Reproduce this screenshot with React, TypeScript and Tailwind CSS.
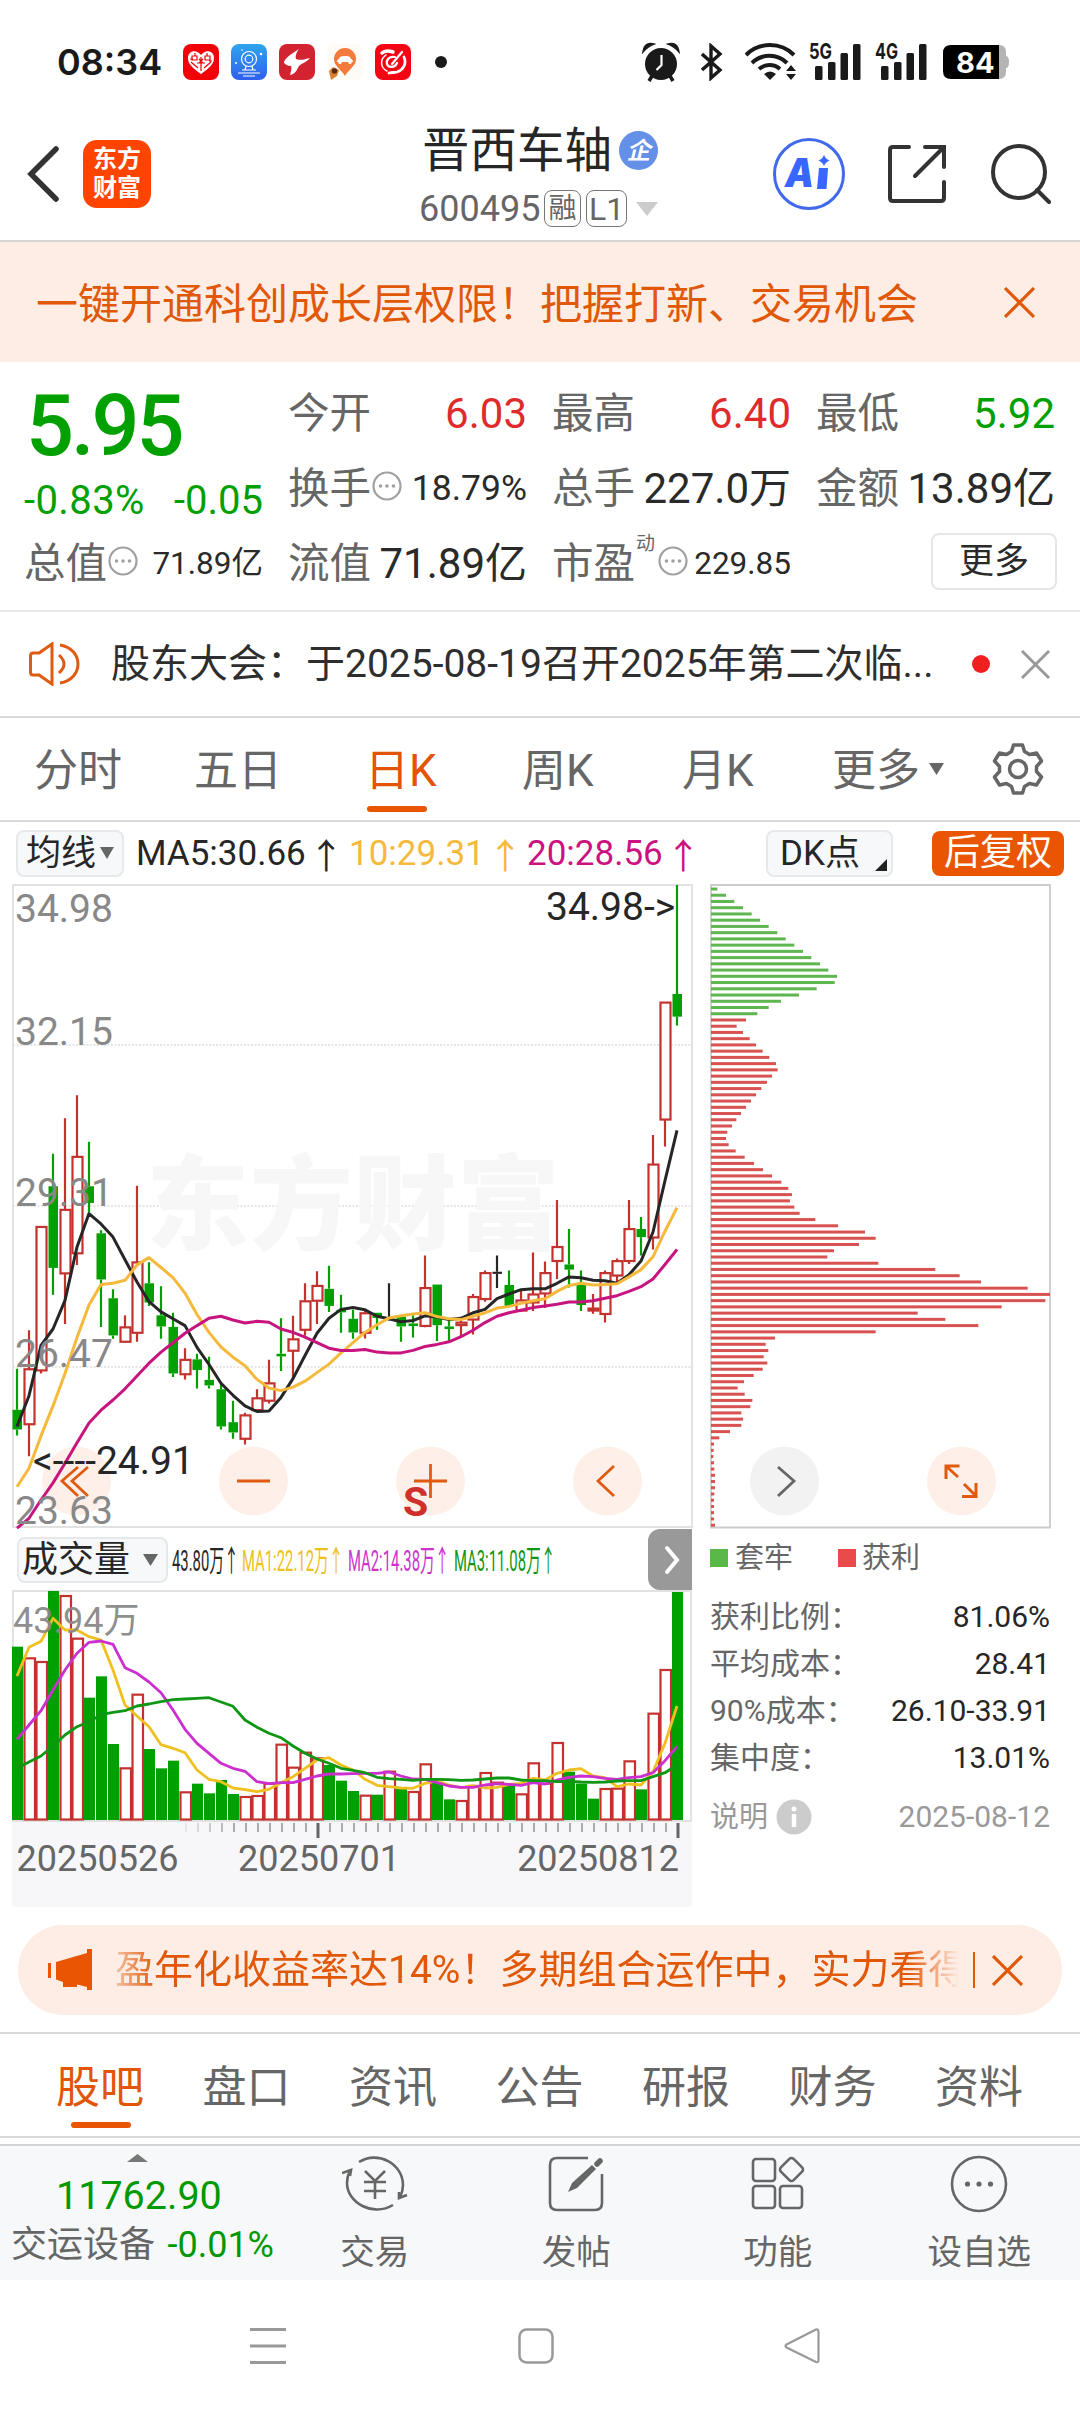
import type { ReactNode } from "react";
import { clsx } from "clsx";

type Kind = "up" | "down" | "flat";

const RED = "#c43230";
const GREEN = "#00a000";
const INK = "#262626";

const STEP = 12;
const barX = (i: number) => 5 + i * STEP;

// [kind, high, body top, body bottom, low]
const candles: [Kind, number, number, number, number][] = [
  ["down", 1165, 1261, 1307, 1321],
  ["up", 1075, 1165, 1296, 1370],
  ["up", 832, 832, 1170, 1176],
  ["down", 662, 738, 929, 992],
  ["up", 579, 792, 943, 1060],
  ["up", 525, 668, 896, 922],
  ["down", 634, 738, 777, 798],
  ["down", 841, 848, 956, 1067],
  ["down", 979, 1000, 1087, 1095],
  ["up", 1040, 1067, 1103, 1103],
  ["up", 737, 915, 1082, 1102],
  ["down", 916, 965, 1010, 1018],
  ["down", 972, 1040, 1066, 1095],
  ["down", 1034, 1067, 1176, 1184],
  ["up", 1117, 1143, 1179, 1190],
  ["down", 1130, 1143, 1168, 1211],
  ["down", 1137, 1191, 1204, 1211],
  ["down", 1200, 1213, 1300, 1307],
  ["down", 1240, 1290, 1314, 1329],
  ["up", 1268, 1273, 1330, 1342],
  ["up", 1213, 1233, 1263, 1265],
  ["up", 1144, 1198, 1241, 1246],
  ["down", 1047, 1130, 1136, 1170],
  ["up", 1041, 1095, 1124, 1185],
  ["up", 965, 1006, 1075, 1088],
  ["up", 937, 970, 1007, 1060],
  ["down", 924, 978, 1018, 1032],
  ["down", 992, 1027, 1033, 1081],
  ["down", 1027, 1048, 1080, 1095],
  ["up", 1030, 1034, 1082, 1094],
  ["down", 1034, 1034, 1046, 1074],
  ["flat", 965, 1044, 1048, 1052],
  ["down", 1040, 1043, 1066, 1102],
  ["down", 1040, 1059, 1065, 1092],
  ["up", 900, 975, 1066, 1068],
  ["down", 968, 968, 1063, 1100],
  ["down", 1050, 1066, 1072, 1100],
  ["up", 1052, 1056, 1064, 1090],
  ["up", 990, 996, 1051, 1085],
  ["up", 935, 940, 1003, 1008],
  ["flat", 900, 938, 943, 976],
  ["down", 935, 969, 1018, 1020],
  ["up", 982, 1004, 1030, 1031],
  ["up", 893, 990, 1011, 1030],
  ["up", 914, 940, 990, 1023],
  ["up", 770, 879, 914, 955],
  ["down", 838, 921, 933, 975],
  ["down", 935, 965, 1016, 1030],
  ["up", 990, 1023, 1030, 1036],
  ["up", 935, 940, 1038, 1057],
  ["up", 907, 912, 948, 965],
  ["up", 770, 837, 914, 920],
  ["down", 810, 838, 857, 900],
  ["up", 618, 686, 859, 886],
  ["up", 307, 307, 583, 645],
  ["down", 33, 288, 341, 362],
];

const ma5 = [1300, 1228, 1110, 1072, 1005, 880, 802, 826, 857, 910, 962, 1008, 1032, 1048, 1064, 1115, 1155, 1199, 1227, 1252, 1265, 1264, 1232, 1188, 1134, 1082, 1047, 1026, 1022, 1027, 1042, 1048, 1055, 1052, 1041, 1044, 1050, 1047, 1034, 1026, 1001, 990, 980, 978, 978, 965, 950, 952, 958, 959, 965, 945, 913, 845, 725, 607];
const ma10 = [1441, 1398, 1322, 1252, 1176, 1092, 1016, 968, 965, 958, 922, 905, 928, 952, 988, 1038, 1080, 1114, 1138, 1158, 1190, 1210, 1216, 1208, 1194, 1174, 1154, 1128, 1104, 1080, 1062, 1046, 1041, 1037, 1034, 1043, 1048, 1050, 1042, 1034, 1023, 1019, 1012, 1006, 1001, 984, 970, 965, 969, 968, 966, 950, 933, 903, 843, 788];
const ma20 = [1538, 1515, 1472, 1432, 1386, 1338, 1292, 1262, 1238, 1212, 1182, 1152, 1126, 1104, 1082, 1064, 1047, 1042, 1051, 1058, 1054, 1056, 1072, 1080, 1091, 1104, 1117, 1122, 1122, 1120, 1126, 1128, 1128, 1122, 1113, 1108, 1102, 1090, 1075, 1057, 1042, 1034, 1028, 1022, 1018, 1014, 1009, 1009, 1006, 1000, 994, 984, 973, 955, 921, 886];

const volumes: [0 | 1, number][] = [
  [0, 380], [1, 412], [1, 423], [0, 213], [1, 225], [1, 353], [0, 533], [0, 469], [0, 672], [1, 742],
  [1, 521], [0, 687], [0, 745], [0, 722], [1, 814], [0, 791], [0, 820], [0, 780], [0, 822], [1, 828],
  [1, 825], [1, 788], [1, 671], [1, 740], [1, 695], [1, 712], [0, 735], [0, 782], [0, 813], [1, 824],
  [0, 824], [1, 752], [0, 805], [1, 813], [1, 730], [0, 785], [0, 838], [1, 840], [1, 795], [1, 756],
  [1, 785], [0, 795], [1, 820], [1, 727], [1, 788], [1, 666], [0, 755], [0, 791], [0, 836], [1, 804],
  [1, 803], [1, 721], [0, 808], [1, 578], [1, 447], [0, 216],
];
const vma1 = [468, 382, 364, 295, 330, 330, 350, 360, 450, 555, 588, 620, 674, 685, 698, 750, 778, 785, 804, 809, 815, 808, 788, 770, 745, 720, 713, 735, 750, 778, 796, 800, 804, 805, 790, 783, 795, 803, 797, 804, 802, 793, 790, 775, 780, 760, 750, 746, 768, 773, 800, 792, 795, 755, 670, 558];
const vma2 = [658, 615, 572, 510, 450, 400, 367, 363, 373, 443, 460, 486, 518, 570, 628, 670, 700, 730, 745, 754, 785, 791, 788, 788, 778, 768, 762, 762, 761, 760, 760, 756, 768, 777, 778, 788, 798, 802, 802, 795, 791, 793, 796, 788, 792, 780, 772, 768, 770, 775, 778, 773, 770, 758, 722, 680];
const vma3 = [745, 726, 708, 678, 645, 620, 605, 584, 577, 572, 558, 552, 545, 539, 537, 535, 533, 546, 559, 600, 622, 640, 653, 678, 700, 717, 730, 745, 751, 758, 772, 776, 778, 781, 778, 778, 779, 781, 780, 777, 774, 774, 780, 782, 782, 785, 784, 786, 787, 786, 783, 782, 782, 770, 758, 735];

const chips = [
  81, 107, 132, 158, 184, 209, 235, 261, 286, 312, 338, 363, 389, 414, 440, 433, 379, 326, 272, 235, 201,
  167, 139, 158, 178, 197, 217, 237, 257, 262, 245, 230, 213, 197, 182, 167, 152, 138, 125, 111, 107, 115,
  136, 163, 191, 218, 245, 273, 294, 305, 299, 312, 328, 375, 443, 524, 556, 506, 431, 411, 564, 735, 808,
  872, 1012, 1079, 1065, 934, 682, 765, 864, 556, 254, 226, 234, 220, 231, 217, 190, 161, 142, 163, 186,
  180, 153, 158, 153, 119, 87, 71, 70, 69, 71, 72, 74, 74, 74, 72, 71, 71, 71, 71, 74,
];
const TRAPPED_ROWS = 21;

const priceY = (v: number) => (v - 33) / 2.34 + 1;
const volumeY = (v: number) => (v - 213) / 3 + 1;
const linePoints = (values: number[], y: (v: number) => number) =>
  values.map((v, i) => `${barX(i)},${y(v).toFixed(1)}`).join(" ");

function Cross({ size, className }: { size: number; className?: string }) {
  return (
    <svg width={size} height={size} viewBox="0 0 30 30" fill="none" stroke="currentColor" strokeWidth="3" className={className}>
      <path d="M1 1 29 29M29 1 1 29" />
    </svg>
  );
}

function Caret({ w, h, className }: { w: number; h: number; className?: string }) {
  return (
    <svg width={w} height={h} viewBox="0 0 10 8" preserveAspectRatio="none" fill="currentColor" className={className}>
      <path d="M0 0H10L5 8z" />
    </svg>
  );
}

function Dots({ className }: { className?: string }) {
  return (
    <svg width="30" height="30" viewBox="0 0 30 30" className={clsx("shrink-0 text-[#a0a0a0]", className)}>
      <circle cx="15" cy="15" r="13.5" fill="none" stroke="currentColor" strokeWidth="2.2" />
      <g fill="currentColor">
        <circle cx="8.5" cy="15" r="1.8" />
        <circle cx="15" cy="15" r="1.8" />
        <circle cx="21.5" cy="15" r="1.8" />
      </g>
    </svg>
  );
}

function Signal({ label, className }: { label: string; className: string }) {
  return (
    <svg width="54" height="48" viewBox="0 -8 54 48" className={clsx("-mt-2", className)} fill="#1a1a1a">
      <text x="0" y="17" fontSize="22" fontWeight="700" textLength="23" lengthAdjust="spacingAndGlyphs" className="font-[Inter]">
        {label}
      </text>
      <rect x="6" y="24" width="7.5" height="14" rx="1.5" />
      <rect x="19" y="20" width="7.5" height="18" rx="1.5" />
      <rect x="31.5" y="11" width="7.5" height="27" rx="1.5" />
      <rect x="44" y="2" width="7.5" height="36" rx="1.5" />
    </svg>
  );
}

function StatusBar() {
  return (
    <div className="flex h-[124px] items-center pl-[57px]">
      <span className="w-[126px] font-[Inter] text-[36px] font-semibold leading-none text-[#1a1a1a]">08:34</span>
      <div className="flex gap-3">
        <svg width="36" height="36" viewBox="0 0 36 36">
          <rect width="36" height="36" rx="8" fill="#f20007" />
          <path d="M18 30C8 23 5 19 5 14c0-8 9-9 13-3 4-6 13-5 13 3 0 5-3 9-13 16z" fill="#fff" />
          <path d="M9 12h5v4h-5zM22 12h5v4h-5zM14 19h8M18 13v14M8 18l7 6M28 18l-7 6M16 15l4 4M20 15l-4 4M12 9v3M24 9v3M7 15h3M26 17h3" stroke="#f20007" strokeWidth="1.2" fill="none" />
        </svg>
        <svg width="36" height="36" viewBox="0 0 36 36">
          <defs>
            <linearGradient id="cam" x1="0" y1="0" x2="0" y2="1">
              <stop stopColor="#2fa5ee" />
              <stop offset="1" stopColor="#2f5fee" />
            </linearGradient>
          </defs>
          <rect width="36" height="36" rx="8" fill="url(#cam)" />
          <g fill="none" stroke="#fff" strokeWidth="1.2">
            <circle cx="18" cy="15" r="7.5" />
            <circle cx="18" cy="15" r="3.8" />
            <path d="M15 22l-1 4M21 22l1 4M11 26h14M7 29h22M12 32h12" />
          </g>
          <circle cx="30" cy="10" r="1.3" fill="#fff" />
          <circle cx="5" cy="19" r="1" fill="#fff" />
          <circle cx="11" cy="6" r=".8" fill="#fff" />
        </svg>
        <svg width="36" height="36" viewBox="0 0 36 36">
          <rect width="36" height="36" rx="8" fill="#d32230" />
          <path d="M5 19C5 14 13 10 20 5c-3 4-4 7-3 10 5 2 9 0 14-1-3 4-8 5-11 8-2 3-3 8-9 9 1-4 2-7 1-9-3 0-5-1-7-3z" fill="#fff" />
        </svg>
        <svg width="36" height="36" viewBox="0 0 36 36">
          <rect width="36" height="36" rx="8" fill="#fefaf5" />
          <path d="M18 32c-4-7-11-10-11-17a11 11 0 0 1 22 0c0 7-7 10-11 17z" fill="#f47b3b" />
          <path d="M10 18c0-3 2-2 3-5q1-1 5-1t5 1c1 3 3 2 3 5z" fill="#fff" />
          <circle cx="13" cy="18.5" r="1.6" fill="#fff" />
          <circle cx="23" cy="18.5" r="1.6" fill="#fff" />
          <path d="M2 27l4-4 6 3-2 6-6 4z" fill="#d9822f" />
          <circle cx="7.5" cy="27" r="2.7" fill="#5b2c14" />
        </svg>
        <svg width="36" height="36" viewBox="0 0 36 36">
          <rect width="36" height="36" rx="8" fill="#f50514" />
          <g fill="none" stroke="#fff" strokeLinecap="round">
            <path d="M7 9c3-3 8-2 11-1" strokeWidth="3.5" />
            <path d="M11 11C4 16 6 24 12 27" strokeWidth="1.5" />
            <path d="M20 13c-6-1-9 3-8 7s8 4 10-1" strokeWidth="2.2" />
            <path d="M27 8 17 20" strokeWidth="2.2" />
            <path d="M29 13c3 7-1 13-7 15-4 1-5 0-8 1" strokeWidth="2.8" />
          </g>
        </svg>
      </div>
      <i className="ml-6 size-3 rounded-full bg-[#1a1a1a]" />
      <svg width="38" height="40" viewBox="0 0 38 40" className="ml-[195px]" fill="#1a1a1a">
        <circle cx="19" cy="22" r="16" />
        <path d="M1 10C2 3 6 0 12 2q-6 2-11 8zM37 10C36 3 32 0 26 2q6 2 11 8z" stroke="#1a1a1a" strokeWidth="1.5" />
        <path d="M10 34 7 39M28 34l3 5" stroke="#1a1a1a" strokeWidth="3.5" />
        <path d="M19.500 13v10l-5 5" fill="none" stroke="#fff" strokeWidth="2.2" />
      </svg>
      <svg width="22" height="38" viewBox="0 0 22 38" className="ml-[21px]" fill="none" stroke="#1a1a1a" strokeWidth="3.4">
        <path d="M1 11 19 27 10 35V3l9 8L1 27" />
      </svg>
      <svg width="52" height="38" viewBox="0 0 52 38" className="ml-[22px]" fill="none" stroke="#1a1a1a" strokeWidth="4">
        <path d="M1 12a34 34 0 0 1 48 0M7 20a25 25 0 0 1 35 0M14 26a16 16 0 0 1 21 0" />
        <path d="M19 31q6-5 12 0l-6 6z" fill="#1a1a1a" stroke="none" />
        <path d="M41 28h10l-5-6zM41 31h10l-5 6z" fill="#1a1a1a" stroke="none" />
      </svg>
      <Signal label="5G" className="ml-[12px]" />
      <Signal label="4G" className="ml-[12px]" />
      <div className="relative ml-[14px] h-[34px] w-[66px]">
        <svg width="66" height="34" viewBox="0 0 66 34">
          <path d="M56 0q7 0 7 7v4q3 0 3 6t-3 6v4q0 7-7 7z" fill="#b4b4b4" />
          <path d="M8 0H56V34H8q-8 0-8-8V8q0-8 8-8z" />
        </svg>
        <span className="absolute left-[13px] top-0 font-[Inter] text-[29px] font-bold leading-[35px] text-white">84</span>
      </div>
    </div>
  );
}

function Header() {
  return (
    <header className="flex h-[118px] items-center border-b-2 border-[#d6d6d6] pb-[16px] pl-[26px]">
      <svg width="34" height="58" viewBox="0 0 34 58" fill="none" stroke="#333" strokeWidth="5.5">
        <path d="M30 4 5 29l25 25" strokeLinecap="round" />
      </svg>
      <div className="ml-[23px] grid size-[68px] place-content-center rounded-[14px] bg-[#ff4400] text-center text-[24px] font-bold leading-[29px] text-white">
        <span>东方</span>
        <span>财富</span>
      </div>
      <div className="ml-[268px] flex w-[341px] flex-col pt-[7px]">
        <div className="flex h-[52px] items-center pl-[3px] text-[47.5px] leading-[52px] text-[#262626]">
          晋西车轴
          <span className="ml-[7px] grid size-[39px] place-content-center rounded-full bg-[#6490e8] text-[24px] font-bold italic leading-none text-white">
            企
          </span>
        </div>
        <div className="mt-[10px] flex h-[44px] items-center text-[36px] leading-none text-[#666]">
          <span className="w-[125px]">600495</span>
          <span className="grid h-[37px] w-[37px] place-content-center rounded-lg border border-[#777] text-[28px]">融</span>
          <span className="ml-[5px] grid h-[37px] w-[41px] place-content-center rounded-lg border border-[#777] text-[32px]">L1</span>
          <Caret w={22} h={14} className="ml-[9px] text-[#ccc]" />
        </div>
      </div>
      <svg width="72" height="72" viewBox="0 0 72 72" className="ml-[13px]">
        <circle cx="36" cy="36" r="34.5" fill="none" stroke="#4169eb" strokeWidth="3" />
        <text x="12" y="49" fontSize="40" fontWeight="900" fontStyle="italic" fill="#3866ff" textLength="29" lengthAdjust="spacingAndGlyphs" className="font-[Inter]">A</text>
        <path d="M46 30h9l-1.500 21h-9.500z" fill="#3866ff" />
        <path d="M51 17q1.500 4 5.500 5.500-4 1.500-5.500 5.500-1.500-4-5.500-5.500 4-1.500 5.500-5.500z" fill="#3866ff" />
      </svg>
      <svg width="58" height="58" viewBox="0 0 58 58" className="ml-[43px]" fill="none" stroke="#333" strokeWidth="4" strokeLinecap="round">
        <path d="M21 2H5Q2 2 2 5V53q0 3 3 3H53q3 0 3-3V37" />
        <path d="M37 2H56V22M55 3 27 31" />
      </svg>
      <svg width="60" height="60" viewBox="0 0 60 60" className="ml-[45px]" fill="none" stroke="#333" strokeWidth="4" strokeLinecap="round">
        <circle cx="28" cy="28" r="26" />
        <path d="M46 46 58 58" />
      </svg>
    </header>
  );
}

function Quote({ label, value, tone, dots, sup }: { label: string; value: string; tone?: string; dots?: boolean; sup?: string }) {
  return (
    <div className="flex items-center justify-between whitespace-nowrap">
      <span className="flex items-center text-[41.5px] text-[#666]">
        {label}
        {sup && <sup className="-top-[20px] self-center pl-px text-[19px] leading-none">{sup}</sup>}
        {dots && <Dots className={clsx("-mt-[6px]", sup ? "ml-[3px]" : "ml-px")} />}
      </span>
      <span className={clsx(dots ? (label === "换手" ? "text-[35.5px]" : "text-[31.5px]") : "text-[42px]", tone ?? "text-[#2a2a2a]")}>{value}</span>
    </div>
  );
}

function Quotes() {
  return (
    <section className="h-[250px] border-b-2 border-[#eaeaea] pt-[14px]">
      <div className="grid grid-cols-[239px_239px_239px_239px] grid-rows-[75px_75px_75px] gap-x-[25px] pl-6 leading-none">
        <div className="row-span-2 flex flex-col text-[#00a000]">
          <span className="pl-[2px] pt-[6px] text-[84.5px] font-medium leading-[90px] tracking-[-3px]">5.95</span>
          <span className="mt-[7px] flex justify-between text-[40px] leading-[44px]">
            <span className="tracking-[.4px]">-0.83%</span>
            <span>-0.05</span>
          </span>
        </div>
        <Quote label="今开" value="6.03" tone="text-[#de2b2b]" />
        <Quote label="最高" value="6.40" tone="text-[#de2b2b]" />
        <Quote label="最低" value="5.92" tone="text-[#00a000]" />
        <Quote label="换手" value="18.79%" dots />
        <Quote label="总手" value="227.0万" />
        <Quote label="金额" value="13.89亿" />
        <Quote label="总值" value="71.89亿" dots />
        <Quote label="流值" value="71.89亿" />
        <Quote label="市盈" value="229.85" dots sup="动" />
        <div className="flex items-center justify-end">
          <button className="-mr-[2px] mb-1 h-[57px] w-[126px] rounded-lg border-2 border-[#e6e6e6] text-[35px] leading-none text-[#2a2a2a]">更多</button>
        </div>
      </div>
    </section>
  );
}

const periods = [
  { name: "分时", width: "w-[160px]" },
  { name: "五日", width: "w-[171px]" },
  { name: "日K", width: "w-[157px]", active: true },
  { name: "周K", width: "w-[160px]" },
  { name: "月K", width: "w-[150px]" },
];

function PeriodTabs() {
  return (
    <nav className="flex h-[104px] items-center border-b-2 border-[#d9d9d9] pl-[34px] text-[44px] leading-none text-[#666]">
      {periods.map((p) => (
        <span key={p.name} className={clsx("relative pt-[4px]", p.width, p.active && "text-[#e25406]")}>
          {p.name}
          {p.active && <i className="absolute -bottom-[19px] left-[2px] h-[6px] w-[60px] rounded-full bg-[#ea5504]" />}
        </span>
      ))}
      <span className="pt-[4px]">更多</span>
      <Caret w={15} h={12} className="ml-[9px]" />
      <svg width="54" height="54" viewBox="0 0 54 54" className="ml-[47px]" fill="none" stroke="#666" strokeWidth="3.5" strokeLinejoin="round">
        <path d="M22.500 3h9l2 6.500 5 3 7-1.500 5 8-5 5.500v5l5 5.500-5 8-7-1.500-5 3-2 6.500h-9l-2-6.500-5-3-7 1.500-5-8 5-5.500v-5l-5-5.500 5-8 7 1.500 5-3z" />
        <circle cx="27" cy="27" r="8.5" />
      </svg>
    </nav>
  );
}

function Chip({ children, className }: { children: ReactNode; className?: string }) {
  return (
    <button className={clsx("flex items-center rounded-lg border-2 border-[#e6e8eb] bg-[#f7f8fa] leading-none text-[#262626]", className)}>
      {children}
    </button>
  );
}

function Average({ text, className }: { text: string; className: string }) {
  return (
    <span className={clsx("flex whitespace-nowrap", className)}>
      {text}
      <span className="ml-[3px] font-['Noto_Sans_CJK_SC']">↑</span>
    </span>
  );
}

function IndicatorRow() {
  return (
    <div className="flex h-[62px] items-center pl-4 text-[35px] leading-none">
      <Chip className="h-[47px] w-[108px] gap-[4px] pl-2 text-[35px]">
        均线
        <Caret w={14} h={12} className="text-[#666]" />
      </Chip>
      <Average text="MA5:30.66" className="ml-[12px] w-[213px] text-[#262626]" />
      <Average text="10:29.31" className="w-[178px] text-[#f5b93c]" />
      <Average text="20:28.56" className="w-[239px] text-[#cc1280]" />
      <Chip className="relative h-[47px] w-[127px] pl-[12px] text-[35px]">
        DK点
        <i className="absolute bottom-[4px] right-[4px] border-b-12 border-l-12 border-b-[#222] border-l-transparent" />
      </Chip>
      <span className="ml-[39px] grid h-[45px] w-[132px] place-content-center rounded-lg bg-[#ea5504] text-[36px] text-white">后复权</span>
    </div>
  );
}

const averages = [
  { values: ma5, color: INK },
  { values: ma10, color: "#f5b93c" },
  { values: ma20, color: "#c8147f" },
];

const axisLabels: [string, number][] = [
  ["34.98", 38],
  ["32.15", 161],
  ["29.31", 322],
  ["26.47", 483],
  ["23.63", 640],
];

function PriceChart() {
  return (
    <svg width="680" height="645" viewBox="0 0 680 645" className="block overflow-visible">
      <rect x="1" y="1" width="679" height="642" fill="none" stroke="#e2e2e2" strokeWidth="2" />
      {[161, 322, 483].map((y) => (
        <path key={y} d={`M1 ${y}H679`} stroke="#dedede" strokeWidth="1.5" strokeDasharray="2 1.5" />
      ))}
      <text x="134" y="358" fontSize="103" fontWeight="900" fill="#f7f7f7" textLength="414">东方财富</text>
      {[64.5, 241.5, 418.5, 595.5].map((x) => (
        <circle key={x} cx={x} cy="597" r="34.5" fill="#fef0e8" />
      ))}
      {candles.map(([kind, high, top, bottom, low], i) => {
        const color = kind === "up" ? RED : kind === "down" ? GREEN : INK;
        const x = barX(i);
        const y1 = priceY(top);
        const y2 = priceY(bottom);
        return (
          <g key={i} stroke={color} strokeWidth="2.2">
            <path d={`M${x} ${priceY(high)}V${y1}M${x} ${y2}V${priceY(low)}`} />
            {kind === "up" ? (
              <rect x={x - 4.5} y={y1 + 0.5} width="10" height={Math.max(y2 - y1 - 1, 1)} fill="#fff" />
            ) : (
              <rect x={x - 4.5} y={y1} width="9.5" height={Math.max(y2 - y1, 2)} fill={color} stroke="none" />
            )}
          </g>
        );
      })}
      {averages.map((a) => (
        <polyline key={a.color} points={linePoints(a.values, priceY)} fill="none" stroke={a.color} strokeWidth="3" strokeLinejoin="round" />
      ))}
      <g fontSize="39" fill="#888" className="font-[Roboto]">
        {axisLabels.map(([label, y]) => (
          <text key={label} x="3" y={y}>{label}</text>
        ))}
        <text x="21" y="590" fill={INK}>{"<----24.91"}</text>
        <text x="534" y="36" fill={INK}>{"34.98->"}</text>
        <text x="391" y="632" fontSize="41" fontWeight="700" fill="#d0302c">S</text>
      </g>
      <g fill="none" stroke="#e05a10" strokeWidth="2.8">
        <path d="M66 583 50 597l16 15M76 583 60 597l16 15" />
        <path d="M225 597h33M402 597h33M418.500 580v34" />
        <path d="M602 582 586 597l16 15" />
      </g>
    </svg>
  );
}

function ChipChart() {
  return (
    <svg width="341" height="645" viewBox="0 0 341 645" className="block">
      <path d="M1 1H340V643.500H1z" fill="none" stroke="#ccc" strokeWidth="1.8" />
      {chips.map((end, i) => (
        <rect key={i} x="1" y={3.5 + i * 6.237} width={(end - 62) / 3} height="3" fill={i < TRAPPED_ROWS ? "#5fb54f" : "#d85252"} />
      ))}
      <circle cx="74.5" cy="597" r="34.5" fill="#f2f2f2" />
      <path d="M68 583l16 14-16 15" fill="none" stroke="#666" strokeWidth="2.8" />
      <circle cx="251.5" cy="597" r="34.5" fill="#fef0e8" />
      <path d="M249.500 582H236V595M236 582l12 11M254 600l12 12M266 599V612.500H252" fill="none" stroke="#e05a10" strokeWidth="3" />
    </svg>
  );
}

const volumeLegend = [
  { text: "43.80万↑", x: 4, color: "#262626" },
  { text: "MA1:22.12万↑", x: 74, color: "#f0c020" },
  { text: "MA2:14.38万↑", x: 180, color: "#cc33cc" },
  { text: "MA3:11.08万↑", x: 286, color: "#0f9614" },
];

const volumeAverages = [
  { values: vma1, color: "#f0c020" },
  { values: vma2, color: "#cc2fcf" },
  { values: vma3, color: "#0f9614" },
];

function VolumeChart() {
  return (
    <svg width="680" height="317" viewBox="0 0 680 317" className="block">
      <rect x="0" y="232" width="680" height="85" fill="#f7f7fa" />
      <rect x="1" y="1" width="678" height="230" fill="none" stroke="#e2e2e2" strokeWidth="2" />
      {volumes.map(([up, top], i) => {
        const x = barX(i);
        const y = volumeY(top);
        return up ? (
          <rect key={i} x={x - 4.5} y={y + 1} width="10.5" height={228.5 - y} fill="#fff" stroke={RED} strokeWidth="2.2" />
        ) : (
          <rect key={i} x={x - 5} y={y} width="11" height={230 - y} fill={GREEN} />
        );
      })}
      {volumeAverages.map((a) => (
        <polyline key={a.color} points={linePoints(a.values, volumeY)} fill="none" stroke={a.color} strokeWidth="2.8" strokeLinejoin="round" />
      ))}
      <text x="1" y="43" fontSize="36" fill="#888" fillOpacity=".95">43.94万</text>
      {volumes.map((_, i) => {
        if (i < 14) return null;
        const major = i === 25 || i === 55;
        return (
          <path
            key={i}
            d={`M${barX(i) + 1} 233V${major ? 248 : 242}`}
            stroke={major ? "#666" : "#999"}
            strokeWidth={major ? 3 : 1.6}
            opacity={Math.min(1, (i - 13) / 5)}
          />
        );
      })}
      <g fontSize="36" fill="#666">
        <text x="4.5" y="281">20250526</text>
        <text x="226" y="281">20250701</text>
        <text x="667" y="281" textAnchor="end">20250812</text>
      </g>
    </svg>
  );
}

function VolumeHeader() {
  return (
    <div className="flex h-[61px] items-center pl-[5px]">
      <Chip className="h-[46px] w-[151px] shrink-0 pl-[3px] text-[36px]">
        成交量
        <Caret w={15} h={12} className="ml-[13px] text-[#666]" />
      </Chip>
      <svg width="480" height="46" viewBox="0 0 480 46" className="shrink-0" fontSize="30">
        {volumeLegend.map((l) => (
          <text key={l.text} transform={`translate(${l.x} 34) scale(.495 1)`} fill={l.color}>{l.text}</text>
        ))}
      </svg>
      <span className="grid h-[61px] w-[44px] shrink-0 place-content-center rounded-l-xl bg-[#999] pl-[3px]">
        <svg width="18" height="30" viewBox="0 0 18 30" fill="none" stroke="#fff" strokeWidth="4" strokeLinecap="round">
          <path d="M4 3 14 15 4 27" />
        </svg>
      </span>
    </div>
  );
}

const stats = [
  ["获利比例：", "81.06%"],
  ["平均成本：", "28.41"],
  ["90%成本：", "26.10-33.91"],
  ["集中度：", "13.01%"],
];

function CostPanel() {
  return (
    <div className="w-[340px] pt-[5px] text-[30px] leading-none text-[#666]">
      <div className="flex h-[48px] items-center">
        <i className="size-[18px] bg-[#5ab946]" />
        <span className="ml-[7px] w-[103px] text-[29px]">套牢</span>
        <i className="size-[18px] bg-[#ea4a4a]" />
        <span className="ml-[6px] text-[29px]">获利</span>
      </div>
      <dl className="mt-[11px] grid auto-rows-[47px]">
        {stats.map(([name, value]) => (
          <div key={name} className="flex items-center justify-between">
            <dt>{name}</dt>
            <dd className="text-[#262626]">{value}</dd>
          </div>
        ))}
      </dl>
      <div className="mt-[16px] flex h-[40px] items-center text-[#999]">
        <span className="text-[29px]">说明</span>
        <svg width="36" height="36" viewBox="0 0 36 36" className="ml-[8px]">
          <circle cx="18" cy="18" r="17.5" fill="#ccc" />
          <path d="M18 15v13" stroke="#fff" strokeWidth="4.5" />
          <circle cx="18" cy="10" r="2.5" fill="#fff" />
        </svg>
        <span className="ml-auto">2025-08-12</span>
      </div>
    </div>
  );
}

const sections = ["股吧", "盘口", "资讯", "公告", "研报", "财务", "资料"];

function BottomAction({ label, children }: { label: string; children: ReactNode }) {
  return (
    <div className="flex flex-1 flex-col items-center gap-[18px] pt-[8px] text-[34.5px] leading-[40px] text-[#666]">
      <svg width="66" height="60" viewBox="0 0 66 60" fill="none" stroke="#666" strokeWidth="2.6">
        {children}
      </svg>
      {label}
    </div>
  );
}

export default function App() {
  return (
    <div className="h-[2412px] w-[1080px] overflow-hidden bg-white font-[Roboto,'Noto_Sans_CJK_SC',sans-serif]">
      <StatusBar />
      <Header />

      <div className="flex h-[120px] items-center bg-[#fdede4] pl-[36px] text-[42px] leading-none text-[#e05808]">
        <span className="w-[968px] whitespace-nowrap pt-[5px]">一键开通科创成长层权限！把握打新、交易机会</span>
        <Cross size={31} />
      </div>

      <Quotes />

      <div className="flex h-[106px] items-center border-b-2 border-[#d9d9d9] pl-[29px] text-[39px] leading-none text-[#2e2e2e]">
        <svg width="52" height="44" viewBox="0 0 52 44" fill="none" stroke="#e05a10" strokeWidth="3">
          <path d="M10 11 23 2V42L10 33H4q-2.500 0-2.500-3V14q0-3 2.500-3z" />
          <path d="M30 13q10 9 0 18M31 3c24 4 24 34 0 38" />
        </svg>
        <span className="ml-[30px] w-[861px] whitespace-nowrap">股东大会：于2025-08-19召开2025年第二次临...</span>
        <i className="size-[18px] rounded-full bg-[#f02020]" />
        <Cross size={29} className="ml-[31px] text-[#999]" />
      </div>

      <PeriodTabs />
      <IndicatorRow />

      <div className="flex">
        <div className="ml-3 w-[680px]">
          <PriceChart />
          <VolumeHeader />
          <VolumeChart />
        </div>
        <div className="ml-[18px]">
          <ChipChart />
          <CostPanel />
        </div>
      </div>

      <div className="mx-[18px] mt-[18px] flex h-[90px] items-center rounded-full bg-[#fdede4] pl-[29px] text-[#e05808]">
        <svg width="46" height="42" viewBox="0 0 46 42" fill="#ea5504">
          <path d="M1 14h3v15H1zM9 13 40 4V0h5v41h-5v-3l-10-2.500v2.500H16v-5l-7-2.500z" />
        </svg>
        <div className="ml-[22px] w-[844px] overflow-hidden whitespace-nowrap text-[39px] leading-[50px] [mask-image:linear-gradient(to_right,rgba(0,0,0,.3),#000_5%,#000_94%,transparent)]">
          盈年化收益率达14%！多期组合运作中，实力看得
        </div>
        <i className="ml-[14px] h-9 w-[2px] bg-[#e05808]" />
        <Cross size={31} className="ml-[17px]" />
      </div>

      <nav className="mt-[17px] flex h-[106px] items-center border-y-2 border-[#d9d9d9] pl-[56px] pt-[6px] text-[44px] leading-none text-[#666]">
        {sections.map((s, i) => (
          <span key={s} className={clsx("relative w-[146.5px] shrink-0 whitespace-nowrap", i === 0 && "text-[#e25406]")}>
            {s}
            {i === 0 && <i className="absolute -bottom-[18px] left-[15px] h-[6px] w-[60px] rounded-full bg-[#ea5504]" />}
          </span>
        ))}
      </nav>

      <footer className="mt-[6px] flex h-[136px] border-t-2 border-[#d4d4d6] bg-[#f7f8fa]">
        <div className="w-[274px] shrink-0 whitespace-nowrap pt-[8px] leading-none">
          <Caret w={21} h={8} className="ml-[127px] rotate-180 text-[#777]" />
          <div className="mt-[12px] pl-[56px] text-[39.5px] leading-[44px] text-[#009900]">11762.90</div>
          <div className="mt-[6px] flex items-center pl-[11px] text-[36px] leading-[42px] text-[#009900]">
            <span className="w-[157px] text-[36px] text-[#666]">交运设备</span>-0.01%
          </div>
        </div>
        <BottomAction label="交易">
          <path d="M17 8C36-4 61 10 61 31q0 6-3 12.500M51 51C31 63 5 49 5 29q0-6 3-13" />
          <path d="M0 19 9 16 8 22M57 38v6l8-3" />
          <path d="M23 17 33 27 43 17M33 27v18M22 28h22M22 37h22" />
        </BottomAction>
        <BottomAction label="发帖">
          <path d="M45 4H14q-7 0-7 7V49q0 7 7 7H52q7 0 7-7V20" />
          <path d="M25 38l4-9L49 11l4 4-19 19z" fill="#666" stroke="none" />
          <path d="M54 10 57 7" strokeWidth="5.5" strokeLinecap="round" />
        </BottomAction>
        <BottomAction label="功能">
          <rect x="8" y="5" width="22" height="22" rx="3" />
          <rect x="8" y="32" width="22" height="22" rx="3" />
          <rect x="35" y="32" width="22" height="22" rx="3" />
          <rect x="37.5" y="6.5" width="18" height="18" rx="3" transform="rotate(45 46.500 15.500)" />
        </BottomAction>
        <BottomAction label="设自选">
          <circle cx="33" cy="30" r="27" />
          <g fill="#666" stroke="none">
            <circle cx="21.5" cy="30" r="2.6" />
            <circle cx="33" cy="30" r="2.6" />
            <circle cx="44.5" cy="30" r="2.6" />
          </g>
        </BottomAction>
      </footer>

      <div className="flex h-[132px] items-center pl-[250px]">
        <svg width="36" height="36" viewBox="0 0 36 36" stroke="#999" strokeWidth="2.8">
          <path d="M0 1.500H36M0 18H36M0 34.500H36" />
        </svg>
        <svg width="36" height="36" viewBox="0 0 36 36" fill="none" stroke="#999" strokeWidth="2.5" className="ml-[232px]">
          <rect x="1.5" y="1.5" width="33" height="33" rx="7" />
        </svg>
        <svg width="36" height="36" viewBox="0 0 36 36" fill="none" stroke="#999" strokeWidth="2.2" strokeLinejoin="round" className="ml-[230px]">
          <path d="M32 1.500Q34.500 1 34.500 4V32q0 3-2.500 2L2.500 19.500q-2-1.500 0-3z" />
        </svg>
      </div>
    </div>
  );
}
